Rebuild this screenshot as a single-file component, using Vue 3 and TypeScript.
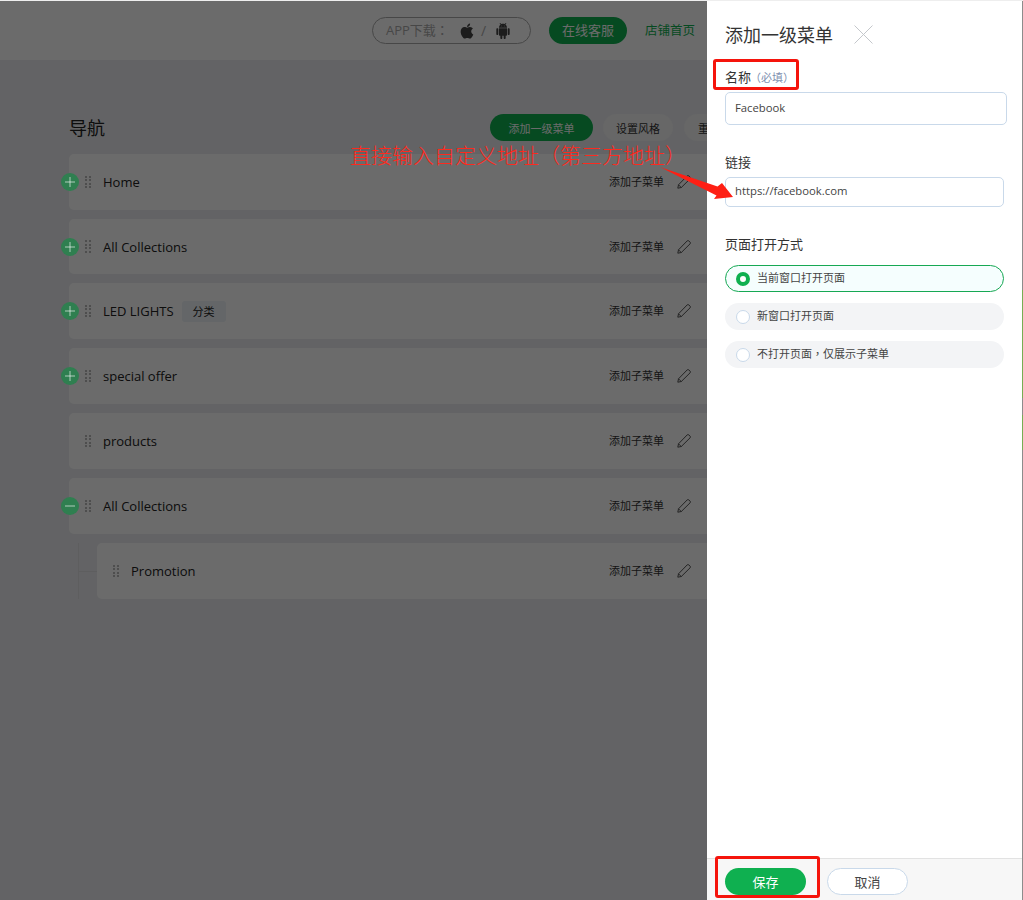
<script setup lang="ts">
interface Row {
  name: string
  toggle?: 'plus' | 'minus'
  tag?: string
  child?: boolean
  short?: boolean
}

const rows: Row[] = [
  { name: 'Home', toggle: 'plus' },
  { name: 'All Collections', toggle: 'plus', short: true },
  { name: 'LED LIGHTS', toggle: 'plus', tag: '分类' },
  { name: 'special offer', toggle: 'plus' },
  { name: 'products' },
  { name: 'All Collections', toggle: 'minus' },
  { name: 'Promotion', child: true },
]
</script>

<template>
  <div class="screen">
    <div class="page">
      <header class="topbar">
        <div class="download">
          <span class="download-label">APP下载<span class="tc">：</span></span>
          <svg class="apple" viewBox="0 0 24 24"><path d="M17.05 20.28c-.98.95-2.05.8-3.08.35-1.09-.46-2.09-.48-3.24 0-1.44.62-2.2.44-3.06-.35C2.79 15.25 3.51 7.59 9.05 7.31c1.35.07 2.29.74 3.08.8 1.18-.24 2.31-.93 3.57-.84 1.51.12 2.65.72 3.4 1.8-3.12 1.87-2.38 5.98.48 7.13-.57 1.5-1.31 2.99-2.54 4.09zM12.03 7.25c-.15-2.23 1.66-4.07 3.74-4.25.29 2.58-2.34 4.5-3.74 4.25z" /></svg>
          <span class="slash">/</span>
          <svg class="android" viewBox="0 0 24 24"><path d="M6 18c0 .55.45 1 1 1h1v3.5c0 .83.67 1.5 1.5 1.5s1.5-.67 1.5-1.5V19h2v3.5c0 .83.67 1.5 1.5 1.5s1.5-.67 1.5-1.5V19h1c.55 0 1-.45 1-1V8H6v10zM3.5 8C2.67 8 2 8.67 2 9.5v7c0 .83.67 1.5 1.5 1.5S5 17.33 5 16.5v-7C5 8.67 4.33 8 3.5 8zm17 0c-.83 0-1.5.67-1.5 1.5v7c0 .83.67 1.5 1.5 1.5s1.5-.67 1.5-1.5v-7c0-.83-.67-1.5-1.5-1.5zm-4.97-5.84l1.3-1.3c.2-.2.2-.51 0-.71-.2-.2-.51-.2-.71 0l-1.48 1.48C13.85 1.23 12.95 1 12 1c-.96 0-1.86.23-2.66.63L7.85.15c-.2-.2-.51-.2-.71 0-.2.2-.2.51 0 .71l1.31 1.31C6.97 3.26 6 5.01 6 7h12c0-1.99-.97-3.75-2.47-4.84zM10 5H9V4h1v1zm5 0h-1V4h1v1z" /></svg>
        </div>
        <button class="service">在线客服</button>
        <a class="home-link">店铺首页</a>
      </header>

      <main class="content">
        <div class="title-row">
          <h1 class="page-title">导航</h1>
          <button class="pill primary">添加一级菜单</button>
          <button class="pill">设置风格</button>
          <button class="pill last">重置</button>
        </div>

        <ul class="menu">
          <li v-for="(row, i) in rows" :key="i" class="menu-row" :class="{ child: row.child, short: row.short }">
            <span v-if="row.child" class="tree-v"></span>
            <span v-if="row.child" class="tree-h"></span>
            <span v-if="row.toggle" class="toggle">
              <svg viewBox="0 0 18 18" width="18" height="18">
                <path v-if="row.toggle === 'plus'" d="M9 4v10M4 9h10" stroke="#fff" stroke-opacity=".62" stroke-width="1" fill="none" />
                <path v-else d="M4 9h10" stroke="#fff" stroke-opacity=".62" stroke-width="1" fill="none" />
              </svg>
            </span>
            <span class="grip"><i v-for="n in 8" :key="n"></i></span>
            <span class="row-name">{{ row.name }}</span>
            <span v-if="row.tag" class="tag">{{ row.tag }}</span>
            <span class="row-action">添加子菜单</span>
            <svg class="pencil" viewBox="0 0 16 16" width="16" height="16">
              <path d="M1.8 14.2l.7-3.4 8.7-8.9a1.1 1.1 0 0 1 1.6 0l1.3 1.3a1.1 1.1 0 0 1 0 1.6l-8.8 8.7zM2.5 10.8l2.9 2.9" fill="none" stroke="#555" stroke-width="1" stroke-linejoin="round" />
            </svg>
          </li>
        </ul>
      </main>
    </div>

    <div class="scrim"></div>

    <aside class="panel">
      <div class="panel-body">
        <div class="panel-head">
          <h2 class="panel-title">添加一级菜单</h2>
          <svg class="close" viewBox="0 0 19 19" width="19" height="19">
            <path d="M.5.5l18 18M18.5.5l-18 18" stroke="#c4c7cb" stroke-width="1" fill="none" />
          </svg>
        </div>

        <label class="field-label name-label">名称<span class="required">（必填）</span></label>
        <div class="input"><span class="lift">Facebook</span></div>

        <label class="field-label link-label">链接</label>
        <div class="input link"><span class="lift">https://facebook.com</span></div>

        <label class="field-label open-label">页面打开方式</label>
        <div class="options">
          <div class="option active">
            <span class="radio"></span>
            <span class="lift">当前窗口打开页面</span>
          </div>
          <div class="option">
            <span class="radio"></span>
            <span class="lift">新窗口打开页面</span>
          </div>
          <div class="option">
            <span class="radio"></span>
            <span class="lift">不打开页面<span class="tc">，</span>仅展示子菜单</span>
          </div>
        </div>
      </div>
      <footer class="panel-foot">
        <button class="save">保存</button>
        <button class="cancel">取消</button>
      </footer>
    </aside>

    <div class="edge"></div>
    <div class="top-line"></div>

    <div class="note">直接输入自定义地址<span class="tc">（</span>第三方地址<span class="tc">）</span></div>
    <svg class="arrow" viewBox="0 0 85 45" width="85" height="45">
      <path d="M5 7L62.5 26.5 67 23 78 37 59 39 61.5 35.5z" fill="#fe1f14" />
    </svg>
    <div class="mark mark-name"></div>
    <div class="mark mark-save"></div>
  </div>
</template>

<style>
html,
body {
  margin: 0;
  padding: 0;
  background: #fff;
}
</style>

<style scoped>
* {
  box-sizing: border-box;
}

.screen {
  position: relative;
  width: 1023px;
  height: 900px;
  overflow: hidden;
  font-family: "Open Sans", "Noto Sans CJK SC", sans-serif;
  color: #333;
}

.tc {
  font-family: "Noto Sans CJK TC", sans-serif;
}

.lift {
  padding-bottom: 3px;
  display: block;
}

.page {
  height: 100%;
  background: #ecedf1;
}

.topbar {
  height: 60px;
  background: #fff;
  display: flex;
  align-items: center;
  justify-content: flex-end;
  padding: 1px 328px 0 0;
  font-size: 13px;
}

.download {
  width: 159px;
  height: 27px;
  border: 1px solid #aaa;
  border-radius: 14px;
  display: flex;
  align-items: center;
  padding-left: 13px;
  color: #aaa;
  font-size: 13px;
}

.download-label {
  width: 71px;
  flex: none;
  white-space: nowrap;
  padding-bottom: 2px;
}

.apple {
  width: 20px;
  height: 20px;
  fill: #444;
  flex: none;
}

.android {
  width: 16px;
  height: 16px;
  fill: #444;
  flex: none;
}

.slash {
  margin: 0 9px 0 4px;
  font-size: 14px;
}

.service {
  width: 78px;
  height: 27px;
  margin-left: 18px;
  border: 0;
  border-radius: 14px;
  background: #0fb050;
  color: #fff;
  font: inherit;
  padding: 0 0 2px;
}

.home-link {
  margin-left: 18px;
  color: #0fb050;
  white-space: nowrap;
  font-size: 12.5px;
  padding-bottom: 2px;
}

.content {
  padding: 54px 0 0 69px;
  width: 750px;
}

.title-row {
  display: flex;
  align-items: center;
  height: 27px;
  gap: 10px;
}

.page-title {
  margin: 0 auto 0 0;
  padding-bottom: 2px;
  font-size: 18px;
  font-weight: 400;
  color: #222;
}

.pill {
  height: 27px;
  width: 70px;
  border: 0;
  border-radius: 14px;
  background: #f5f5f5;
  font-family: inherit;
  font-size: 11px;
  color: #333;
  padding: 0;
}

.pill.primary {
  width: 103px;
  background: #0fb050;
  color: #fff;
}

.pill.last {
  width: 66px;
  margin-left: 1px;
  text-align: left;
  padding-left: 14px;
}

.menu {
  list-style: none;
  margin: 13px 0 0;
  padding: 0;
  display: flex;
  flex-direction: column;
  gap: 9px;
}

.menu-row {
  position: relative;
  height: 56px;
  background: #fff;
  border-radius: 5px;
  display: flex;
  align-items: center;
  padding-left: 16px;
  font-size: 13px;
  color: #222;
}

.menu-row.short {
  height: 55px;
}

.menu-row.child {
  margin-left: 28px;
}

.tree-v {
  position: absolute;
  left: -19px;
  top: 0;
  height: 56px;
  border-left: 1px solid #dfe0e3;
}

.tree-h {
  position: absolute;
  left: -18px;
  top: 28px;
  width: 18px;
  border-top: 1px solid #dfe0e3;
}

.toggle {
  position: absolute;
  left: -8px;
  top: 50%;
  margin-top: -9px;
  width: 18px;
  height: 18px;
  border-radius: 50%;
  background: #2f7f50;
  z-index: 6;
  display: flex;
}

.grip {
  width: 6px;
  height: 13px;
  display: grid;
  grid-template-columns: 2px 2px;
  grid-auto-rows: 2px;
  gap: 1.6px 2px;
  margin-right: 12px;
}

.grip i {
  background: #bbbbbb;
  display: block;
}

.row-name {
  white-space: nowrap;
}

.tag {
  margin-left: 8px;
  width: 44px;
  height: 21px;
  border-radius: 3px;
  background: #eef3f7;
  font-size: 11px;
  display: flex;
  align-items: center;
  justify-content: center;
}

.row-action {
  margin-left: auto;
  font-size: 11px;
  width: 67px;
  padding-bottom: 2px;
  color: #333;
}

.pencil {
  margin-right: 58px;
  flex: none;
}

.scrim {
  position: absolute;
  inset: 0;
  background: rgba(0, 0, 0, 0.58);
  z-index: 5;
}

.panel {
  position: absolute;
  top: 0;
  bottom: 0;
  left: 707px;
  width: 315px;
  background: #fff;
  z-index: 10;
  display: flex;
  flex-direction: column;
}

.panel-body {
  flex: 1;
  padding: 0 0 0 18px;
}

.panel-head {
  display: flex;
  align-items: center;
  height: 68px;
  gap: 21px;
}

.panel-title {
  margin: 0;
  font-size: 18px;
  font-weight: 400;
  color: #333;
}

.close {
  flex: none;
}

.field-label {
  display: block;
  font-size: 13px;
  line-height: 18px;
  height: 18px;
  color: #333;
}

.name-label {
  margin-bottom: 6px;
}

.required {
  font-family: "Noto Sans CJK TC", sans-serif;
  font-size: 11px;
  color: #7d8fb0;
  margin-left: -1px;
}

.input {
  height: 33px;
  width: 282px;
  border: 1px solid #c9d9ea;
  border-radius: 5px;
  padding-left: 9px;
  font-size: 11.3px;
  display: flex;
  align-items: center;
  color: #444;
}

.input.link {
  width: 279px;
  height: 30px;
}

.link-label {
  margin: 29px 0 5px;
  line-height: 16px;
}

.open-label {
  margin: 30px 0 10px;
  line-height: 14px;
}

.options {
  display: flex;
  flex-direction: column;
  gap: 11px;
  width: 279px;
}

.option {
  height: 27px;
  border-radius: 14px;
  background: #f3f4f6;
  display: flex;
  align-items: center;
  padding-left: 11px;
  font-size: 11px;
  color: #444;
  gap: 7px;
}

.option.active {
  background: #f5fefe;
  border: 1px solid #16a853;
  padding-left: 10px;
}

.radio {
  width: 14px;
  height: 14px;
  border-radius: 50%;
  background: #fff;
  border: 1px solid #c9d9ea;
  flex: none;
}

.option.active .radio {
  border: 4px solid #0fb050;
}

.panel-foot {
  height: 42px;
  background: #f7f7f7;
  border-top: 1px solid #e2e2e2;
  display: flex;
  align-items: flex-start;
  padding: 9px 0 0 18px;
  gap: 21px;
}

.save,
.cancel {
  width: 81px;
  height: 27px;
  border-radius: 14px;
  font-family: inherit;
  font-size: 13px;
  padding: 0;
}

.save {
  border: 0;
  background: #0fb050;
  color: #fff;
}

.cancel {
  border: 1px solid #c9d9ea;
  background: #fff;
  color: #444;
}

.edge {
  position: absolute;
  right: 0;
  top: 0;
  bottom: 0;
  width: 1px;
  z-index: 11;
  background: linear-gradient(to bottom, #8c8c8c 0 290px, #76ad52 290px 398px, #8c8c8c 398px 415px, #76ad52 415px 450px, #8c8c8c 450px);
}

.top-line {
  position: absolute;
  left: 0;
  right: 0;
  top: 0;
  height: 1px;
  background: #eeeeee;
  z-index: 11;
}

.note {
  position: absolute;
  left: 350px;
  top: 139px;
  z-index: 12;
  font-size: 21px;
  line-height: 30px;
  color: #fe2a1e;
  font-family: "Noto Sans CJK SC", sans-serif;
  font-weight: 300;
  white-space: nowrap;
}

.arrow {
  position: absolute;
  left: 655px;
  top: 160px;
  z-index: 12;
}

.mark {
  position: absolute;
  z-index: 12;
  border: 3px solid #f5140c;
  border-radius: 3px;
}

.mark-name {
  left: 713px;
  top: 59px;
  width: 86px;
  height: 31px;
}

.mark-save {
  left: 715px;
  top: 856px;
  width: 105px;
  height: 42px;
}
</style>
